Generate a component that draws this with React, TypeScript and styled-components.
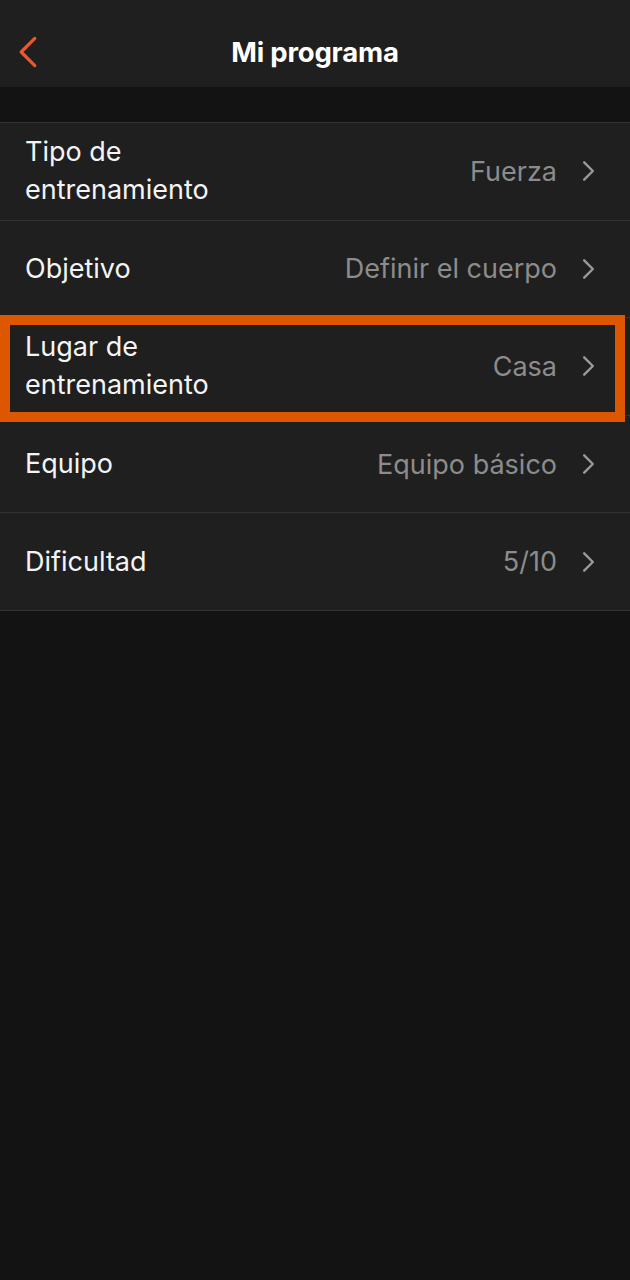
import React from 'react'
import styled, { createGlobalStyle } from 'styled-components'

const ROWS = [
  { id: 'tipo', label: 'Tipo de\nentrenamiento', value: 'Fuerza' },
  { id: 'objetivo', label: 'Objetivo', value: 'Definir el cuerpo' },
  { id: 'lugar', label: 'Lugar de\nentrenamiento', value: 'Casa', marked: true },
  { id: 'equipo', label: 'Equipo', value: 'Equipo básico' },
  { id: 'dificultad', label: 'Dificultad', value: '5/10' },
]

const Global = createGlobalStyle`
  html, body { margin: 0; padding: 0; background: #131313; }
  body { font-family: Inter, "Noto Sans", sans-serif; -webkit-font-smoothing: antialiased; }
`

const Screen = styled.div`
  width: 630px;
  min-height: 1280px;
  background: #131313;
`

const Header = styled.header`
  height: 87px;
  box-sizing: border-box;
  padding-top: 16px;
  background: #1f1f1f;
  display: grid;
  grid-template-columns: 60px 1fr 60px;
  align-items: center;
`

const BackButton = styled.button`
  background: none;
  border: 0;
  padding: 0 0 0 17px;
  height: 40px;
  display: flex;
  align-items: center;
  cursor: pointer;
`

const Title = styled.h1`
  margin: 0;
  text-align: center;
  font-size: 27.5px;
  font-weight: 700;
  color: #ffffff;
  letter-spacing: -0.2px;
`

const Spacer = styled.div`
  height: 35px;
`

const List = styled.ul`
  list-style: none;
  margin: 0;
  padding: 0;
  background: #1f1f1f;
  border-bottom: 1px solid #333333;
`

const Row = styled.li`
  position: relative;
  height: 96.6px;
  border-top: 1px solid #333333;
  display: flex;
  align-items: center;
  justify-content: space-between;
  padding: 0 35px 0 25px;
`

const Label = styled.span`
  font-size: 27px;
  line-height: 38px;
  color: #f4f4f4;
  white-space: pre-line;
`

const Right = styled.span`
  display: flex;
  align-items: center;
  gap: 25px;
`

const Value = styled.span`
  font-size: 27px;
  color: #8c8c8c;
`

const Highlight = styled.span`
  position: absolute;
  z-index: 2;
  top: -3px;
  bottom: -7px;
  left: 0;
  right: 5px;
  border: 10px solid #dc5700;
  pointer-events: none;
`

const Chevron = ({ color, w, h, stroke, left }: { color: string; w: number; h: number; stroke: number; left?: boolean }) => (
  <svg width={w} height={h} viewBox="0 0 12 20" fill="none">
    <path
      d={left ? 'M10 2 L2 10 L10 18' : 'M2 2 L10 10 L2 18'}
      stroke={color}
      strokeWidth={stroke}
      strokeLinecap="round"
      strokeLinejoin="round"
    />
  </svg>
)

export default function App() {
  return (
    <Screen>
      <Global />
      <Header>
        <BackButton aria-label="Volver">
          <Chevron left color="#e85a2c" w={22} h={34} stroke={1.9} />
        </BackButton>
        <Title>Mi programa</Title>
        <span />
      </Header>
      <Spacer />
      <List>
        {ROWS.map((r) => (
          <Row key={r.id}>
            <Label>{r.label}</Label>
            <Right>
              <Value>{r.value}</Value>
              <Chevron color="#9a9a9a" w={13} h={22} stroke={2.2} />
            </Right>
            {r.marked && <Highlight />}
          </Row>
        ))}
      </List>
    </Screen>
  )
}
